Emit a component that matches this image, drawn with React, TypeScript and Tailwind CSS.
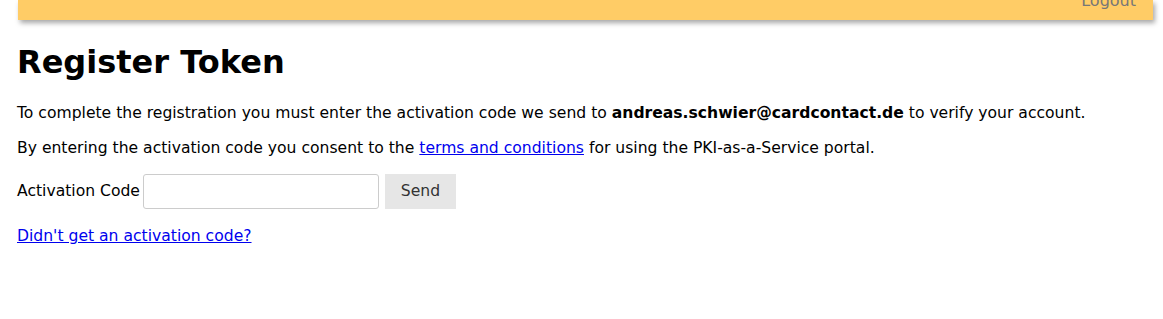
export default function App() {
  return (
    <div className="min-h-[319px] bg-white text-black" style={{ fontFamily: '"DejaVu Sans", sans-serif' }}>
      <div className="ml-[18px] mr-[10px] h-[20px] bg-[#ffcc66] shadow-[2px_3px_5px_rgba(0,0,0,0.35)] flex justify-end items-end pr-[17px] overflow-hidden">
        <span className="text-[16px] leading-[20px] translate-y-[-9px] text-[#777]">Logout</span>
      </div>
      <div className="px-[17px]">
        <h1 className="mt-[22px] text-[32px] leading-[40px] font-bold">Register Token</h1>
        <p className="mt-[21px] text-[15.6px] leading-[20px]">
          To complete the registration you must enter the activation code we send to{' '}
          <b>andreas.schwier@cardcontact.de</b> to verify your account.
        </p>
        <p className="mt-[15px] text-[15.6px] leading-[20px]">
          By entering the activation code you consent to the{' '}
          <a href="#" className="text-[#0000ee] underline">terms and conditions</a> for using the PKI-as-a-Service portal.
        </p>
        <div className="mt-[16px] flex items-center gap-[3px] text-[15.6px]">
          <label>Activation Code</label>
          <input className="w-[236px] h-[35px] rounded-[3px] border border-[#ccc] bg-white" />
          <button className="ml-[3px] w-[71px] h-[35px] bg-[#e6e6e6] text-[#333]">Send</button>
        </div>
        <a href="#" className="mt-[16px] inline-block text-[15.6px] text-[#0000ee] underline">Didn't get an activation code?</a>
      </div>
    </div>
  )
}
